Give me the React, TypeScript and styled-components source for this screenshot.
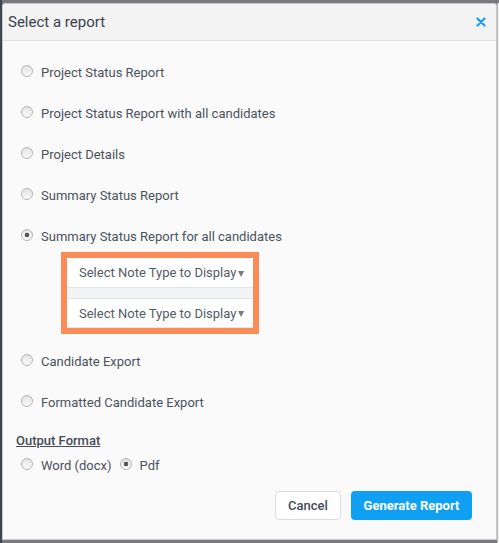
import styled, { createGlobalStyle } from 'styled-components';

const GlobalStyle = createGlobalStyle`
  html, body {
    margin: 0;
    padding: 0;
    background: #77797d;
  }
  body {
    font-family: Roboto, "Liberation Sans", sans-serif;
  }
`;

const reports = [
  'Project Status Report',
  'Project Status Report with all candidates',
  'Project Details',
  'Summary Status Report',
  'Summary Status Report for all candidates',
];

const moreReports = ['Candidate Export', 'Formatted Candidate Export'];

const App = () => {
  return (
    <>
      <GlobalStyle />
      <Page>
        <Dialog>
          <Header>
            <Title>Select a report</Title>
            <CloseButton aria-label="close">
              <svg width="10" height="10" viewBox="0 0 10 10">
                <path d="M1.5 1.5 L8.5 8.5 M8.5 1.5 L1.5 8.5" stroke="#1a9cf0" strokeWidth="2.2" strokeLinecap="round" />
              </svg>
            </CloseButton>
          </Header>
          <Body>
            {reports.map((r, i) => (
              <Row key={r}>
                <Radio type="radio" name="report" defaultChecked={i === 4} />
                <RowText>{r}</RowText>
              </Row>
            ))}
            <Highlight>
              <NoteSelect>
                Select Note Type to Display<Arrow>▾</Arrow>
              </NoteSelect>
              <NoteSelect $last>
                Select Note Type to Display<Arrow>▾</Arrow>
              </NoteSelect>
            </Highlight>
            <Row $first>
              <Radio type="radio" name="report" />
              <RowText>{moreReports[0]}</RowText>
            </Row>
            <Row>
              <Radio type="radio" name="report" />
              <RowText>{moreReports[1]}</RowText>
            </Row>
            <FormatLabel>Output Format</FormatLabel>
            <FormatRow>
              <Radio type="radio" name="format" />
              <RowText>Word (docx)</RowText>
              <Radio type="radio" name="format" defaultChecked />
              <RowText>Pdf</RowText>
            </FormatRow>
          </Body>
          <Footer>
            <CancelButton>Cancel</CancelButton>
            <PrimaryButton>Generate Report</PrimaryButton>
          </Footer>
        </Dialog>
        <EdgeStrip />
      </Page>
    </>
  );
};

const Page = styled.div`
  display: flex;
  height: 543px;
  width: 499px;
  box-sizing: border-box;
  padding-top: 3px;
  border-left: 2px solid #3d4551;
  background: #787a7e;
`;
const Dialog = styled.div`
  width: 495px;
  height: 537px;
  box-sizing: border-box;
  background: #fafafa;
  border: 1px solid #c9c9c9;
  border-radius: 3px 3px 0 0;
  display: flex;
  flex-direction: column;
`;
const EdgeStrip = styled.div`
  flex: 1;
  background: #ececec;
  border-left: 1px solid #bdbdbd;
`;
const Header = styled.div`
  height: 36px;
  background: #f3f3f3;
  border-bottom: 1px solid #e0e0e0;
  display: flex;
  align-items: center;
  justify-content: space-between;
  padding: 0 10px 0 5px;
  border-radius: 3px 3px 0 0;
`;
const Title = styled.div`
  font-size: 15px;
  color: #3b424c;
`;
const CloseButton = styled.div`
  display: flex;
  align-items: center;
`;
const Body = styled.div`
  padding: 21px 0 0 18px;
  display: flex;
  flex-direction: column;
  flex: 1;
`;
const Row = styled.label<{ $first?: boolean }>`
  display: flex;
  align-items: center;
  height: 20px;
  margin-bottom: 21px;
  margin-top: ${p => (p.$first ? '17px' : '0')};
`;
const Radio = styled.input`
  appearance: none;
  width: 12px;
  height: 12px;
  margin: 0 8px 0 0;
  border-radius: 50%;
  border: 1px solid #b4b4b4;
  background: linear-gradient(#e2e2e2, #fbfbfb);
  box-sizing: border-box;
  position: relative;
  top: -1px;
  &:checked {
    background: radial-gradient(circle, #555 0 2px, transparent 2.6px), linear-gradient(#e2e2e2, #fbfbfb);
  }
`;
const RowText = styled.span`
  font-size: 13px;
  color: #4b525d;
  margin-right: 8px;
`;
const Highlight = styled.div`
  margin: -15px 0 0 40px;
  width: 198px;
  box-sizing: border-box;
  border: 6px solid #fb8b57;
  background: #f3f4f6;
`;
const NoteSelect = styled.div<{ $last?: boolean }>`
  height: 30px;
  box-sizing: border-box;
  background: #fff;
  border-bottom: 1px solid #e2e4e8;
  border-top: ${p => (p.$last ? '1px solid #e2e4e8' : 'none')};
  margin-bottom: ${p => (p.$last ? '0' : '10px')};
  padding-left: 12px;
  display: flex;
  align-items: center;
  font-size: 13px;
  color: #545b66;
`;
const Arrow = styled.span`
  font-size: 12px;
  color: #7a7a7a;
  margin-left: 2px;
`;
const FormatLabel = styled.div`
  margin: 0 0 6px -5px;
  font-size: 13px;
  font-weight: 500;
  color: #454c57;
  text-decoration: underline;
  height: 16px;
`;
const FormatRow = styled.div`
  display: flex;
  align-items: center;
  height: 20px;
`;
const Footer = styled.div`
  display: flex;
  justify-content: flex-end;
  gap: 10px;
  padding: 0 24px 19px 0;
`;
const CancelButton = styled.button`
  height: 29px;
  width: 66px;
  background: #fff;
  border: 1px solid #dcdcdc;
  border-radius: 4px;
  font-family: Roboto, "Liberation Sans", sans-serif;
  font-size: 13px;
  font-weight: 500;
  color: #454c57;
`;
const PrimaryButton = styled.button`
  height: 29px;
  width: 121px;
  background: #0f9ff3;
  border: none;
  border-radius: 4px;
  font-family: Roboto, "Liberation Sans", sans-serif;
  font-size: 13px;
  font-weight: 700;
  color: #fff;
`;

export default App;
